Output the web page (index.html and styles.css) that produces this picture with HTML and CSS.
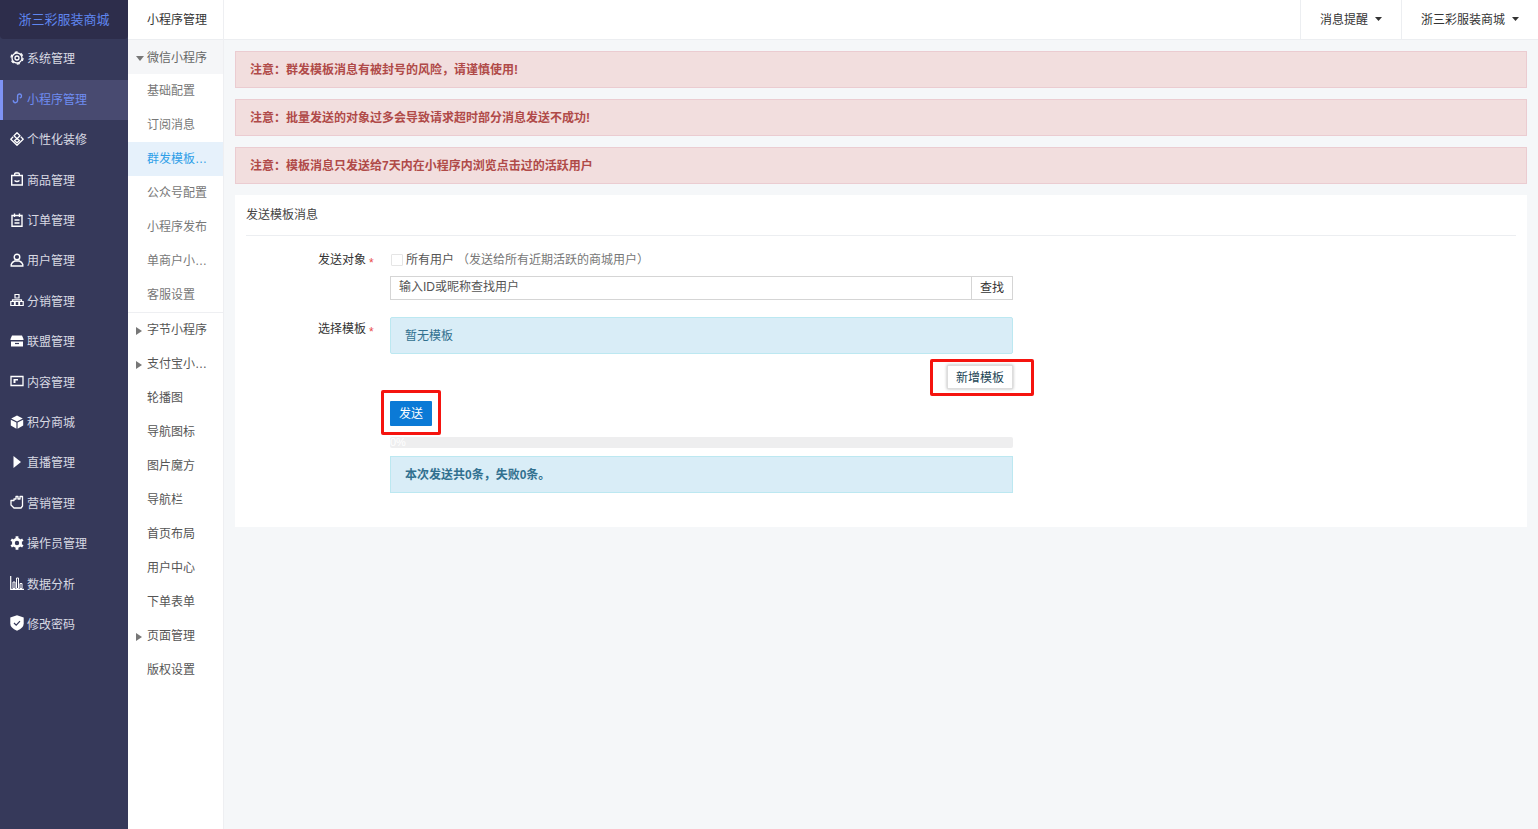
FILE: index.html
```html
<!DOCTYPE html>
<html lang="zh-CN">
<head>
    <meta charset="UTF-8">
    <title>发送模板消息</title>
    <link rel="stylesheet" href="styles.css">
</head>
<body>
    <div class="layout">
        <!-- Main sidebar -->
        <aside class="sidebar">
            <div class="logo">浙三彩服装商城</div>
            <nav class="menu">
                <a class="menu-item">
                    <svg viewBox="0 0 14 14"><circle cx="7" cy="7" r="2" fill="none" stroke="currentColor" stroke-width="1.3"/><circle cx="7" cy="7" r="5" fill="none" stroke="currentColor" stroke-width="1.3"/><circle cx="7" cy="7" r="6" fill="none" stroke="currentColor" stroke-width="1.3" stroke-dasharray="3.100 3.180"/></svg>
                    系统管理
                </a>
                <a class="menu-item active">
                    <svg viewBox="0 0 14 14"><path d="M1.500 10a2.500 2.500 0 1 0 5 0V4.500a2.300 2.300 0 1 1 3 2.300" fill="none" stroke="currentColor" stroke-width="1.600" stroke-linecap="round"/></svg>
                    小程序管理
                </a>
                <a class="menu-item">
                    <svg viewBox="0 0 14 14"><path d="M7 .8L10 3.800 7 6.800 4 3.800zM3.200 4.800L.8 7.200 7 13.300 13.200 7.200 10.800 4.800M4.500 8.500L7 6.800 9.500 8.500 7 10.800z" fill="none" stroke="currentColor" stroke-width="1.300" stroke-linejoin="round"/></svg>
                    个性化装修
                </a>
                <a class="menu-item">
                    <svg viewBox="0 0 14 14"><path d="M1.700 3.500h10.600v9.500H1.700zM4.700 3.500V2a1 1 0 0 1 1-1h2.600a1 1 0 0 1 1 1v1.500M4.500 8.500q2.500 2 5 0" fill="none" stroke="currentColor" stroke-width="1.400"/></svg>
                    商品管理
                </a>
                <a class="menu-item">
                    <svg viewBox="0 0 14 14"><path d="M2 2.500h10v10.800H2zM4.500 .5v3.500M9.500 .5v3.500M4.500 7h5M4.500 10h5" fill="none" stroke="currentColor" stroke-width="1.400"/></svg>
                    订单管理
                </a>
                <a class="menu-item">
                    <svg viewBox="0 0 14 14"><circle cx="7" cy="4" r="2.800" fill="none" stroke="currentColor" stroke-width="1.400"/><path d="M1.200 13h11.600v-1.500q-.8-2.500-3.500-3.500H4.700Q2 9 1.200 11.500z" fill="none" stroke="currentColor" stroke-width="1.400"/></svg>
                    用户管理
                </a>
                <a class="menu-item">
                    <svg viewBox="0 0 14 14"><path d="M5 1.500h4v3.500H5zM.8 8.500h3.700v4H.8zM5.150 8.500h3.700v4H5.150zM9.500 8.500h3.700v4H9.500zM2.500 8.500V6.800h9v1.700" fill="none" stroke="currentColor" stroke-width="1.200"/></svg>
                    分销管理
                </a>
                <a class="menu-item">
                    <svg viewBox="0 0 14 14"><path d="M2 1.500h10L13.500 5v1H.5V5zM1 7.500h12v5H1z" fill="currentColor"/><path d="M5 9.500h4" stroke="#36395a" stroke-width="1.200"/></svg>
                    联盟管理
                </a>
                <a class="menu-item">
                    <svg viewBox="0 0 14 14"><path d="M1 2.500h12v9H1z" fill="none" stroke="currentColor" stroke-width="1.300"/><path d="M3.500 5H8v1.500H5.500V9h-2z" fill="currentColor"/></svg>
                    内容管理
                </a>
                <a class="menu-item">
                    <svg viewBox="0 0 14 14"><path d="M7 .5l5.800 3L7 6.400 1.200 3.500zM.8 4.800l5.600 2.800v6.100L.8 10.600zM13.200 4.800L7.600 7.600v6.100l5.600-3.100z" fill="currentColor"/></svg>
                    积分商城
                </a>
                <a class="menu-item">
                    <svg viewBox="0 0 14 14"><path d="M3.500 1L11 7l-7.500 6z" fill="currentColor"/></svg>
                    直播管理
                </a>
                <a class="menu-item">
                    <svg viewBox="0 0 14 14"><path d="M1 5.500h3V4h2V1.500h2V4h2V1.500h2.500V11L11 13H4L1 10z" fill="none" stroke="currentColor" stroke-width="1.300" stroke-linejoin="round"/></svg>
                    营销管理
                </a>
                <a class="menu-item">
                    <svg viewBox="0 0 14 14"><circle cx="7" cy="7" r="3.600" fill="none" stroke="currentColor" stroke-width="2.800"/><path d="M7 .3v13.400M1.200 3.650l11.600 6.700M1.200 10.350l11.600-6.700" stroke="currentColor" stroke-width="2.800" stroke-dasharray="2.400 8.600"/></svg>
                    操作员管理
                </a>
                <a class="menu-item">
                    <svg viewBox="0 0 14 14"><path d="M.7 0v13.300H14" fill="none" stroke="currentColor" stroke-width="1.200"/><path d="M3 6h2v6.500H3zM6.500 2h2v10.500h-2zM10 7.500h2v5h-2z" fill="none" stroke="currentColor" stroke-width="1"/></svg>
                    数据分析
                </a>
                <a class="menu-item">
                    <svg class="icon-shield" viewBox="0 0 14 16"><path d="M7 .2l6.700 2.300v6q0 4.500-6.700 7.300Q.3 13 .3 8.500v-6z" fill="currentColor"/><path d="M4 8l2.200 2.200 3.800-4" fill="none" stroke="#36395a" stroke-width="1.200"/></svg>
                    修改密码
                </a>
            </nav>
        </aside>

        <!-- Sub menu -->
        <aside class="submenu">
            <div class="submenu-title">小程序管理</div>
            <a class="sub-item open"><i class="arrow-down"></i>微信小程序</a>
            <a class="sub-item">基础配置</a>
            <a class="sub-item">订阅消息</a>
            <a class="sub-item current">群发模板…</a>
            <a class="sub-item">公众号配置</a>
            <a class="sub-item">小程序发布</a>
            <a class="sub-item">单商户小…</a>
            <a class="sub-item">客服设置</a>
            <a class="sub-item dark top-line"><i class="arrow-right"></i>字节小程序</a>
            <a class="sub-item dark"><i class="arrow-right"></i>支付宝小…</a>
            <a class="sub-item dark">轮播图</a>
            <a class="sub-item dark">导航图标</a>
            <a class="sub-item dark">图片魔方</a>
            <a class="sub-item dark">导航栏</a>
            <a class="sub-item dark">首页布局</a>
            <a class="sub-item dark">用户中心</a>
            <a class="sub-item dark">下单表单</a>
            <a class="sub-item dark"><i class="arrow-right"></i>页面管理</a>
            <a class="sub-item dark">版权设置</a>
        </aside>

        <div class="main">
            <header class="topbar">
                <a class="top-link">消息提醒<i class="caret"></i></a>
                <a class="top-link">浙三彩服装商城<i class="caret"></i></a>
            </header>

            <div class="content">
                <div class="alert-danger">注意：群发模板消息有被封号的风险，请谨慎使用!</div>
                <div class="alert-danger">注意：批量发送的对象过多会导致请求超时部分消息发送不成功!</div>
                <div class="alert-danger">注意：模板消息只发送给7天内在小程序内浏览点击过的活跃用户</div>

                <div class="card">
                    <div class="card-title">发送模板消息</div>

                    <div class="form-row first">
                        <label class="form-label">发送对象<span class="star">*</span></label>
                        <div class="form-body">
                            <div class="check-line">
                                <span class="checkbox"></span>所有用户<span class="check-hint">（发送给所有近期活跃的商城用户）</span>
                            </div>
                            <div class="search-group">
                                <div class="search-input">输入ID或昵称查找用户</div>
                                <button class="search-btn">查找</button>
                            </div>
                        </div>
                    </div>

                    <div class="form-row second">
                        <label class="form-label">选择模板<span class="star">*</span></label>
                        <div class="form-body">
                            <div class="alert-info">暂无模板</div>
                            <div class="add-line">
                                <button class="add-btn">新增模板</button>
                                <span class="mark mark-add"></span>
                            </div>
                            <div class="send-line">
                                <button class="send-btn">发送</button>
                                <span class="mark mark-send"></span>
                            </div>
                            <div class="progress">0%</div>
                            <div class="alert-info result">本次发送共0条，失败0条。</div>
                        </div>
                    </div>
                </div>
            </div>
        </div>
    </div>
</body>
</html>
```

FILE: styles.css
```css
/* General reset */
* {
    box-sizing: border-box;
}

html, body {
    height: 100%;
}

body {
    margin: 0;
    font-family: "Liberation Sans", "Noto Sans CJK SC", sans-serif;
    font-size: 12px;
    color: #333;
    background-color: #f5f7f9;
    overflow: hidden;
}

button {
    font-family: inherit;
    font-size: 12px;
    cursor: pointer;
}

.layout {
    display: flex;
    height: 829px;
}

/* Main sidebar */
.sidebar {
    width: 128px;
    flex: none;
    background-color: #36395a;
}

.logo {
    height: 39px;
    line-height: 39px;
    text-align: center;
    font-size: 13px;
    color: #5f86f0;
    background-color: #2d2d4b;
    border-radius: 0 0 4px 4px;
}

.menu {
    padding-top: 0.6px;
}

.menu-item {
    display: flex;
    align-items: center;
    height: 40.4px;
    padding: 0 0 3.6px 10px;
    color: #d9dae3;
    cursor: pointer;
}

.menu-item svg {
    width: 14px;
    height: 14px;
    margin-right: 3px;
    flex: none;
    color: #fff;
}

.menu-item .icon-shield {
    height: 16px;
}

.menu-item.active {
    background-color: #484a70;
    border-left: 3px solid #7f93f5;
    padding-left: 9px;
    color: #6f8df2;
}

.menu-item.active svg {
    width: 12px;
    color: #6f8df2;
}

/* Sub menu */
.submenu {
    width: 96px;
    flex: none;
    background-color: #fff;
    border-right: 1px solid #eeeff2;
}

.submenu-title {
    height: 40px;
    line-height: 40px;
    padding-left: 19px;
    color: #333;
    border-bottom: 1px solid #eceef1;
}

.sub-item {
    position: relative;
    display: block;
    height: 34px;
    line-height: 34px;
    padding-left: 19px;
    color: #777;
    cursor: pointer;
}

.sub-item.open {
    line-height: 36px;
    background-color: #f5f6f8;
    color: #666;
}

.sub-item.current {
    background-color: #e6f1fb;
    color: #2f9fe8;
}

.sub-item.dark {
    color: #555;
}

.sub-item.top-line {
    height: 35px;
    border-top: 1px solid #eeeff2;
}

.arrow-down {
    position: absolute;
    left: 8px;
    top: 16px;
    border-top: 5px solid #777;
    border-left: 4px solid transparent;
    border-right: 4px solid transparent;
}

.arrow-right {
    position: absolute;
    left: 8px;
    top: 14px;
    border-left: 6px solid #777;
    border-top: 4px solid transparent;
    border-bottom: 4px solid transparent;
}

/* Top bar */
.main {
    flex: 1;
    min-width: 0;
}

.topbar {
    display: flex;
    justify-content: flex-end;
    height: 40px;
    background-color: #fff;
    border-bottom: 1px solid #eceef1;
}

.top-link {
    display: flex;
    align-items: center;
    padding: 0 19px 3px;
    color: #333;
    border-left: 1px solid #eceef1;
    cursor: pointer;
}

.caret {
    width: 7px;
    height: 4px;
    margin-left: 7px;
    margin-top: 2px;
    background-color: #333;
    clip-path: polygon(0 0, 100% 0, 50% 100%);
}

/* Content */
.content {
    padding: 11px 11px 0;
}

.alert-danger {
    height: 37px;
    line-height: 36px;
    margin-bottom: 11px;
    padding-left: 14px;
    font-weight: bold;
    color: #b04a48;
    background-color: #f2dede;
    border: 1px solid #ebccd1;
}

.card {
    height: 332px;
    padding: 0 11px;
    background-color: #fff;
}

.card-title {
    height: 41px;
    line-height: 41px;
    font-size: 12px;
    color: #444;
    border-bottom: 1px solid #eceef1;
}

/* Form */
.form-row {
    display: flex;
}

.form-row.first {
    margin-top: 13px;
}

.form-row.second {
    margin-top: 17px;
}

.form-label {
    width: 144px;
    flex: none;
    padding-right: 24px;
    line-height: 22px;
    text-align: right;
    color: #333;
}

.form-row.second .form-label {
    line-height: 24px;
}

.star {
    position: absolute;
    margin: 3px 0 0 3px;
    color: #e94b4b;
}

.form-body {
    width: 623px;
    flex: none;
}

.check-line {
    display: flex;
    align-items: center;
    height: 22px;
    padding-bottom: 3px;
    color: #555;
}

.checkbox {
    width: 12px;
    height: 12px;
    margin: 2px 3px 0 1px;
    border: 1px solid #e5e5e5;
    border-radius: 1px;
}

.check-hint {
    margin-left: 3px;
    color: #777;
}

.search-group {
    display: flex;
    height: 24px;
    margin-top: 5px;
}

.search-input {
    flex: 1;
    line-height: 20px;
    padding-left: 8px;
    color: #555;
    border: 1px solid #d5d5d5;
    border-right: none;
}

.search-btn {
    width: 42px;
    padding: 0 0 4px;
    color: #333;
    background-color: #fff;
    border: 1px solid #d5d5d5;
}

.alert-info {
    height: 37px;
    line-height: 36px;
    padding-left: 14px;
    color: #31708f;
    background-color: #d9edf7;
    border: 1px solid #bce8f1;
    border-radius: 2px;
}

.alert-info.result {
    margin-top: 8px;
    font-weight: bold;
    border-radius: 0;
}

.add-line {
    position: relative;
    display: flex;
    justify-content: flex-end;
    margin-top: 11px;
}

.add-btn {
    width: 66px;
    height: 24px;
    padding: 0 0 2px;
    color: #245;
    background-color: #fff;
    border: 1px solid #ddd;
    box-shadow: 0 0 3px rgba(0, 0, 0, 0.3);
}

.send-line {
    position: relative;
    margin-top: 12px;
}

.send-btn {
    display: block;
    width: 42px;
    height: 25px;
    padding: 0 0 3px;
    color: #fff;
    background-color: #0b7ad6;
    border: none;
    border-radius: 1px;
}

/* Red marks drawn over the screenshot */
.mark {
    position: absolute;
    border: 3px solid #f5140f;
    border-radius: 2px;
}

.mark-add {
    right: -21px;
    top: -6px;
    width: 104px;
    height: 37px;
}

.mark-send {
    left: -9px;
    top: -11px;
    width: 60px;
    height: 45px;
}

.progress {
    height: 11px;
    line-height: 10px;
    margin-top: 11px;
    font-size: 11px;
    color: #fff;
    background-color: #eeeeef;
    border-radius: 2px;
}
```
